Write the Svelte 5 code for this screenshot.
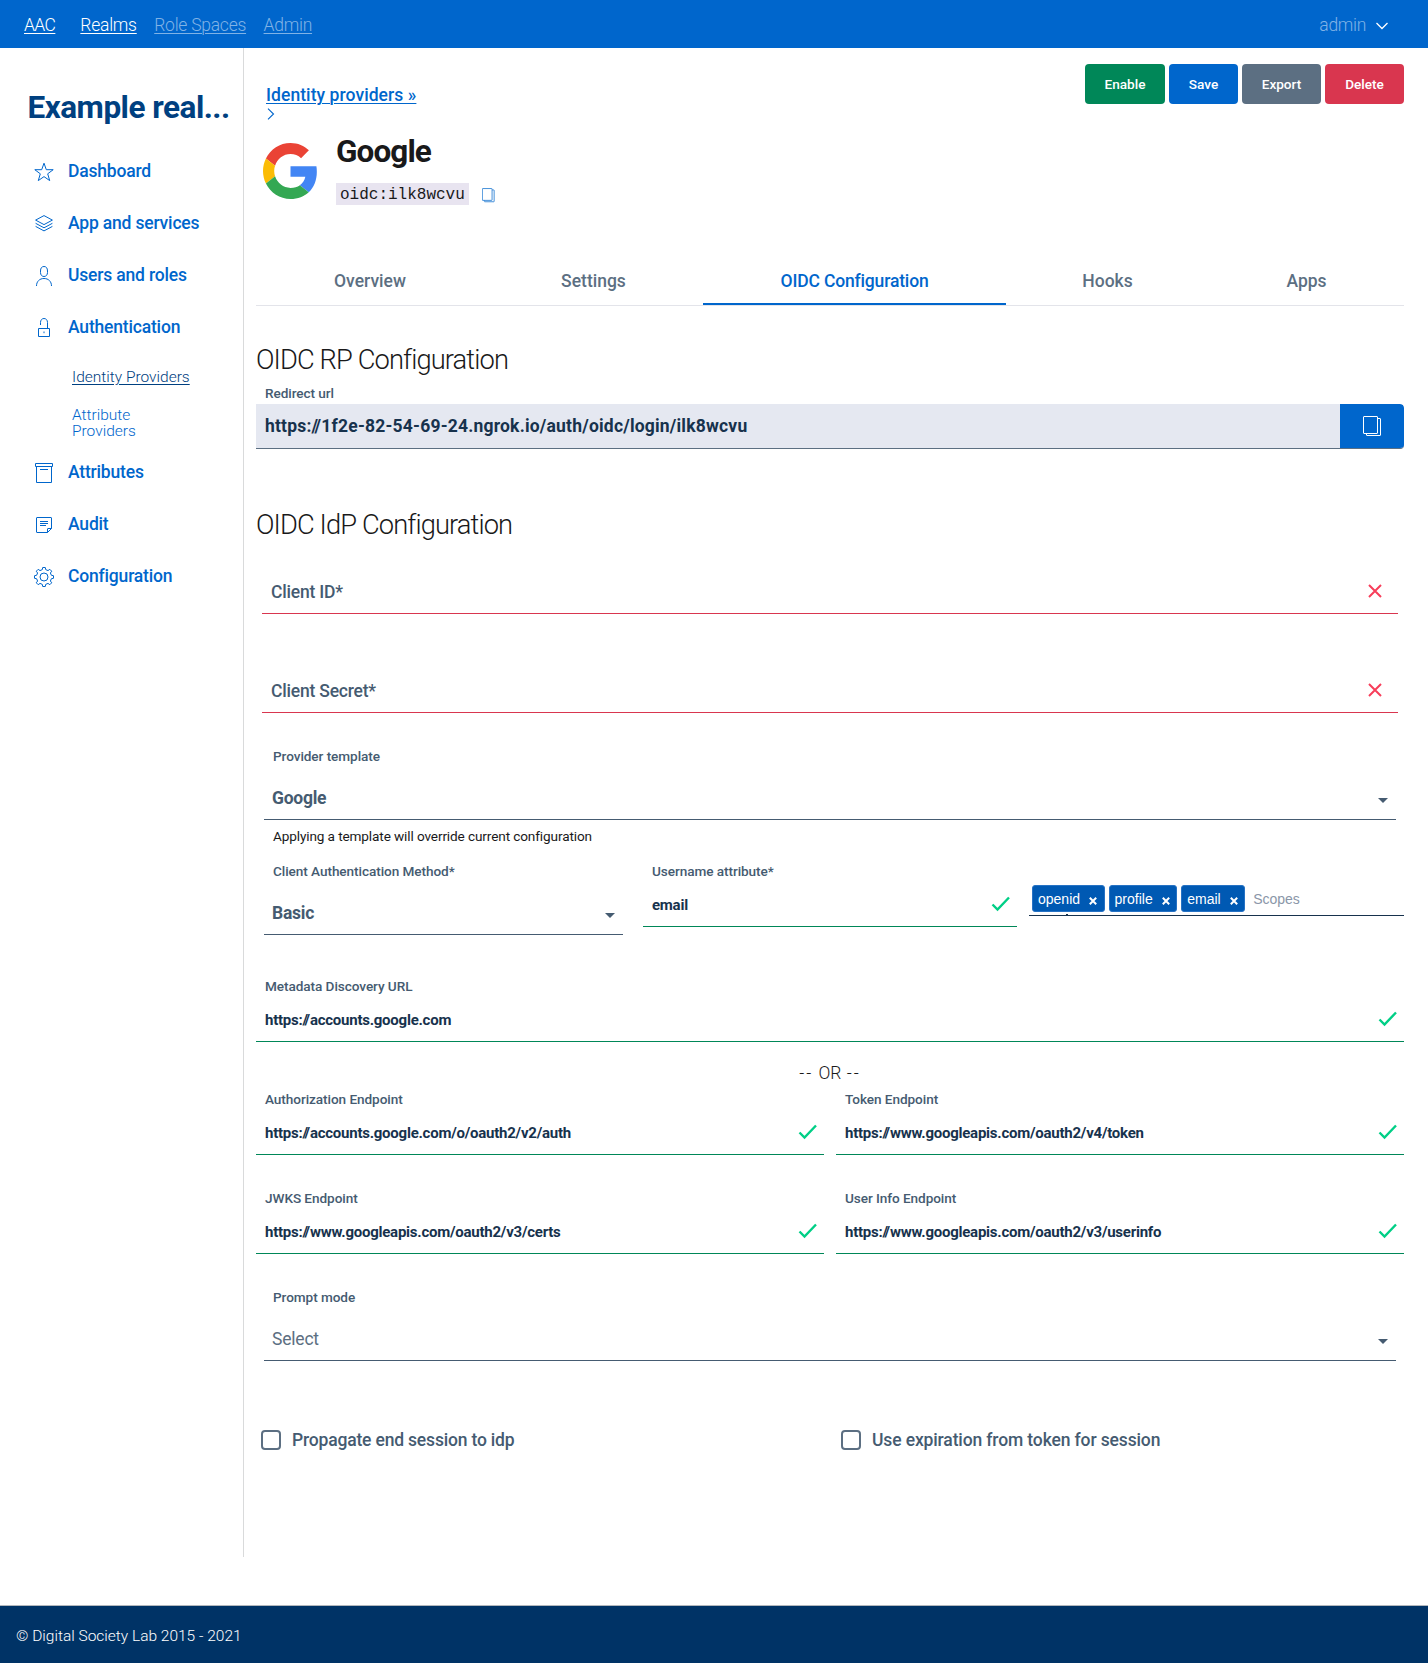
<script>
  const menu = [
    { label: 'Dashboard', icon: 'star' },
    { label: 'App and services', icon: 'layers' },
    { label: 'Users and roles', icon: 'user' },
    { label: 'Authentication', icon: 'lock', children: ['Identity Providers', 'Attribute Providers'] },
    { label: 'Attributes', icon: 'box' },
    { label: 'Audit', icon: 'note' },
    { label: 'Configuration', icon: 'gear' }
  ];
  const tabs = ['Overview', 'Settings', 'OIDC Configuration', 'Hooks', 'Apps'];
  const scopes = ['openid', 'profile', 'email'];
  const endpoints = [
    ['Authorization Endpoint', 'https://accounts.google.com/o/oauth2/v2/auth'],
    ['Token Endpoint', 'https://www.googleapis.com/oauth2/v4/token'],
    ['JWKS Endpoint', 'https://www.googleapis.com/oauth2/v3/certs'],
    ['User Info Endpoint', 'https://www.googleapis.com/oauth2/v3/userinfo']
  ];
</script>

{#snippet icon(name)}
  <svg class="icon" viewBox="0 0 24 24" width="24" height="24" aria-hidden="true">
    {#if name === 'star'}
      <path d="M12 3.2 14.3 9.7H21.2L15.7 13.8 17.7 20.6 12 16.6 6.3 20.6 8.3 13.8 2.8 9.7H9.7Z" />
    {:else if name === 'layers'}
      <path d="M12 3.6 20.4 8.1 12 12.6 3.6 8.1ZM3.6 11.3 12 15.8 20.4 11.3M3.6 14.4 12 18.9 20.4 14.4" />
    {:else if name === 'user'}
      <path d="M8.5 7C8.5 4 9.8 2.5 12 2.5S15.5 4 15.5 7V8.5C15.5 11 14 12.5 12 12.5S8.500 11 8.500 8.500ZM4.500 22C4.500 17.500 7.500 14.500 12 14.500S19.500 17.500 19.500 22" />
    {:else if name === 'lock'}
      <path d="M6.500 12.500H17.500V20.500H6.500ZM8.500 9V6.500C8.500 4 10 2.500 12 2.500S15.500 4 15.500 6.500V12.500M12 15.500V17.200" />
    {:else if name === 'box'}
      <path d="M3.500 2.500H20.500V5.500H3.500ZM4.500 5.500V21.500H19.500V5.500M8 8.500H16" />
    {:else if name === 'note'}
      <path d="M5 4.500H19Q19.500 4.500 19.500 5V15.500L15.500 19.500H5Q4.500 19.500 4.500 19V5Q4.500 4.500 5 4.500ZM19.500 15.500H16Q15.500 15.500 15.500 16V19.500M8 8.500H16M8 10.500H16M8 12.500H14" />
    {:else}
      <circle cx="12" cy="12" r="4" />
      <path d="M10.300 4.600 10.700 2.500H13.300L13.700 4.600 16 5.600 17.800 4.300 19.700 6.200 18.400 8 19.400 10.300 21.500 10.700V13.300L19.400 13.700 18.400 16 19.700 17.800 17.800 19.700 16 18.400 13.700 19.400 13.300 21.500H10.700L10.300 19.400 8 18.400 6.200 19.700 4.300 17.800 5.600 16 4.600 13.700 2.500 13.300V10.700L4.600 10.300 5.600 8 4.300 6.200 6.200 4.300 8 5.600Z" />
    {/if}
  </svg>
{/snippet}

{#snippet check()}
  <svg class="check" viewBox="0 0 20 16" width="20" height="16" aria-hidden="true"><path d="M1.500 8.500 6.500 13.500 18 1.500" /></svg>
{/snippet}

{#snippet copy()}
  <svg class="copy" viewBox="0 0 18 21" aria-hidden="true"><path d="M1 .5H14Q14.500 .5 14.500 1V17Q14.500 17.500 14 17.500H1Q.5 17.500 .5 17V1Q.5 .5 1 .5ZM14.500 2.500H17Q17.500 2.500 17.500 3V19Q17.500 19.500 17 19.500H4Q3.500 19.500 3.500 19V17.500" /></svg>
{/snippet}

{#snippet url(value)}
  {@const parts = value.split('//')}
  <span>{parts[0]}{#if parts.length > 1}<span class="slash">/</span>/{parts[1]}{/if}</span>
{/snippet}

{#snippet field(label, value)}
  <div class="field">
    <span class="label">{label}</span>
    <div class="value">{@render url(value)}{@render check()}</div>
  </div>
{/snippet}

{#snippet select(label, value, muted)}
  <div class="select">
    <span class="label">{label}</span>
    <div class="choice" class:muted>
      <span>{value}</span>
      <svg class="caret" viewBox="0 0 10 5" width="10" height="5" aria-hidden="true"><path d="M0 0H10L5 5Z" /></svg>
    </div>
  </div>
{/snippet}

<div class="page">
  <header>
    <nav>
      <a class="brand" href="#top">AAC</a>
      <a class="current" href="#top">Realms</a>
      <a href="#top">Role Spaces</a>
      <a href="#top">Admin</a>
    </nav>
    <div class="account">
      <span>admin</span>
      <svg viewBox="0 0 12 8" width="12" height="8" aria-hidden="true"><path d="M.5 1 6 6.500 11.500 1" /></svg>
    </div>
  </header>

  <div class="body">
    <aside>
      <h2>Example real...</h2>
      <ul class="menu">
        {#each menu as item}
          <li>
            <a class="entry" href="#top">{@render icon(item.icon)}<span>{item.label}</span></a>
            {#if item.children}
              <div class="sub">
                {#each item.children as child, i}
                  <a class:active={i === 0} href="#top">{child}</a>
                {/each}
              </div>
            {/if}
          </li>
        {/each}
      </ul>
    </aside>

    <main>
      <div class="top">
        <div class="crumbs">
          <a href="#top">Identity providers »</a>
          <svg viewBox="0 0 8 12" width="8" height="12" aria-hidden="true"><path d="M1 .7 6.500 6 1 11.300" /></svg>
        </div>
        <div class="actions">
          <button class="enable">Enable</button>
          <button class="save">Save</button>
          <button class="export">Export</button>
          <button class="delete">Delete</button>
        </div>
      </div>

      <div class="provider">
        <svg class="logo" viewBox="0 0 48 48" preserveAspectRatio="none" aria-hidden="true">
          <path fill="#ea4335" d="M24 9.500c3.540 0 6.710 1.220 9.210 3.600l6.850-6.850C35.900 2.380 30.470 0 24 0 14.620 0 6.510 5.380 2.560 13.220l7.980 6.190C12.430 13.720 17.740 9.500 24 9.500z" />
          <path fill="#4285f4" d="M46.980 24.550c0-1.570-.15-3.090-.38-4.550H24v9.020h12.940c-.58 2.960-2.260 5.480-4.780 7.180l7.730 6c4.510-4.180 7.090-10.360 7.090-17.650z" />
          <path fill="#fbbc05" d="M10.530 28.590c-.48-1.450-.76-2.990-.76-4.590s.27-3.140.76-4.590l-7.980-6.190C.92 16.460 0 20.120 0 24c0 3.880.92 7.540 2.560 10.780l7.970-6.190z" />
          <path fill="#34a853" d="M24 48c6.480 0 11.930-2.130 15.890-5.810l-7.730-6c-2.150 1.450-4.920 2.300-8.160 2.300-6.260 0-11.570-4.220-13.470-9.910l-7.980 6.190C6.510 42.620 14.620 48 24 48z" />
        </svg>
        <div class="identity">
          <h1>Google</h1>
          <div class="code-row"><code>oidc:ilk8wcvu</code>{@render copy()}</div>
        </div>
      </div>

      <div class="tabs">
        {#each tabs as tab, i}
          <a class:active={i === 2} href="#top">{tab}</a>
        {/each}
      </div>

      <h3>OIDC RP Configuration</h3>
      <span class="label redirect-label">Redirect url</span>
      <div class="redirect">
        {@render url('https://1f2e-82-54-69-24.ngrok.io/auth/oidc/login/ilk8wcvu')}
        <button>{@render copy()}</button>
      </div>

      <h3 class="idp">OIDC IdP Configuration</h3>
      {#each ['Client ID*', 'Client Secret*'] as name}
        <div class="required">
          <span>{name}</span>
          <svg viewBox="0 0 14 14" width="14" height="14" aria-hidden="true"><path d="M1 1 13 13M13 1 1 13" /></svg>
        </div>
      {/each}

      {@render select('Provider template', 'Google', false)}
      <p class="help">Applying a template will override current configuration</p>

      <div class="auth-row">
        {@render select('Client Authentication Method*', 'Basic', false)}
        {@render field('Username attribute*', 'email')}
        <div class="scopes">
          {#each scopes as scope}
            <span class="tag">{scope}<svg viewBox="0 0 8 8" width="8" height="8" aria-hidden="true"><path d="M.8 .8 7.200 7.200M7.200 .8 .8 7.200" /></svg></span>
          {/each}
          <span class="placeholder">Scopes</span>
          <i class="speck"></i>
        </div>
      </div>

      {@render field('Metadata Discovery URL', 'https://accounts.google.com')}
      <p class="or"><span class="dash">--</span> OR <span class="dash">--</span></p>

      <div class="endpoints">
        {#each endpoints as [label, value]}
          {@render field(label, value)}
        {/each}
      </div>

      {@render select('Prompt mode', 'Select', true)}

      <div class="checks">
        <label><input type="checkbox" /><span>Propagate end session to idp</span></label>
        <label><input type="checkbox" /><span>Use expiration from token for session</span></label>
      </div>
    </main>
  </div>

  <footer>© Digital Society Lab 2015 - 2021</footer>
</div>

<style>
  :global(body) { margin: 0; background: #fff; }
  .page {
    width: 1428px; height: 1663px; display: flex; flex-direction: column;
    font-family: Roboto, sans-serif; font-size: 17.5px; color: #19191a;
  }
  .page, .page * { box-sizing: border-box; }
  a { text-decoration: none; }
  h1, h2, h3, p, ul { margin: 0; padding: 0; }
  svg { flex: none; fill: none; }

  header {
    flex: none; height: 48px; padding: 0 40px 0 24px; background: #06c;
    display: flex; justify-content: space-between; font-weight: 300; line-height: 50px;
  }
  nav { display: flex; gap: 17.500px; letter-spacing: -.25px; }
  nav a { color: #80b3e6; text-decoration: underline; text-decoration-thickness: 1px; text-underline-offset: 2px; }
  nav .brand { margin-right: 7.500px; letter-spacing: -.6px; }
  nav .brand, nav .current { color: #fff; }
  .account { display: flex; align-items: center; gap: 10px; color: #80b3e6; letter-spacing: -.3px; }
  .account span { margin-top: 2px; }
  .account svg { stroke: #fff; stroke-width: 1.300; margin-top: 4px; }

  .body { display: flex; height: 1509px; flex: none; }
  aside { width: 244px; border-right: 1px solid #d9dadb; padding-top: 38px; }
  h2 { font-size: 31.500px; line-height: 44px; letter-spacing: -.5px; color: #004080; padding-left: 27.500px; white-space: nowrap; }
  .menu { list-style: none; padding-top: 15px; }
  .entry {
    height: 52px; padding-left: 32px; display: flex; align-items: center; gap: 12px;
    color: #06c; font-weight: 500; letter-spacing: -.18px;
  }
  .entry span { line-height: 20px; margin-top: -1px; }
  .icon { stroke: #06c; stroke-width: 1; margin-top: 2px; }
  .sub { display: flex; flex-direction: column; gap: 22px; width: 150px; margin: 16px 0 7px 72px; font-size: 15.500px; line-height: 16px; font-weight: 300; }
  .sub a { color: #06c; width: 118px; }
  .sub a:last-child { width: 80px; }
  .sub .active { color: #004080; text-decoration: underline; text-decoration-thickness: 1px; text-underline-offset: 2px; white-space: nowrap; }

  main { width: 1160px; padding-left: 12px; display: flex; flex-direction: column; }
  .top { height: 88px; display: flex; justify-content: space-between; padding-top: 16px; }
  .crumbs { padding: 21px 0 0 10px; display: flex; flex-direction: column; }
  .crumbs a { line-height: 20px; font-weight: 500; letter-spacing: .07px; color: #06c; text-decoration: underline; text-decoration-thickness: 1px; text-underline-offset: 2px; }
  .crumbs svg { stroke: #06c; stroke-width: 1.100; margin: 3px 0 0 1px; }
  .actions { display: flex; gap: 4px; height: 40px; }
  button { border: 0; padding: 0; color: #fff; font: 500 13.600px/20px Roboto, sans-serif; border-radius: 4px; }
  .enable { background: #008758; width: 80px; }
  .save { background: #06c; width: 69px; }
  .export { background: #5c6f82; width: 79px; }
  .delete { background: #d9364f; width: 79px; }

  .provider { height: 121px; padding-left: 7px; display: flex; gap: 18px; }
  .logo { width: 55px; height: 56px; margin-top: 7px; }
  .identity { display: flex; flex-direction: column; }
  h1 { font-size: 31.500px; line-height: 40px; margin-top: -4px; letter-spacing: -.9px; }
  .code-row { display: flex; align-items: center; gap: 13px; margin-top: 11px; }
  code { background: #e8e4f0; font: 16px/24px "Liberation Mono", monospace; padding: 0 4px; width: 133px; height: 22px; }
  .code-row .copy { width: 12.500px; height: 15px; stroke: #3385d6; stroke-width: 1.300; margin-top: 3px; }

  .tabs { height: 49px; display: grid; grid-template-columns: 228px 219px 303px 203px 195px; border-bottom: 1px solid #e3e4ea; }
  .tabs a { height: 48px; text-align: center; line-height: 48px; font-weight: 500; color: #5c6f82; }
  .tabs a.active { color: #06c; border-bottom: 2px solid #06c; letter-spacing: -.16px; }

  h3 { font-size: 27.300px; font-weight: 300; line-height: 34px; letter-spacing: -.89px; margin-top: 37px; }
  .label { font-size: 13.600px; font-weight: 500; line-height: 20px; color: #455b71; letter-spacing: -.07px; white-space: nowrap; }
  .redirect-label { padding-left: 9px; margin-top: 6px; line-height: 20px; }
  .redirect { height: 45px; margin-top: 1px; background: #e5e8f1; border-bottom: 1px solid #5c6f82; border-radius: 0 4px 4px 0; display: flex; justify-content: space-between; overflow: hidden; line-height: 45px; font-weight: 700; color: #17324d; letter-spacing: .2px; padding-left: 9px; }
  .slash { letter-spacing: -3.500px; }
  .redirect button { width: 64px; background: #06c; display: flex; align-items: center; justify-content: center; border-radius: 0 4px 0 0; }
  .redirect .copy { width: 18px; height: 21px; stroke: #fff; stroke-width: 1; }

  .idp { margin-top: 59px; }
  .required { height: 46px; margin: 26px 6px 0; border-bottom: 1px solid #d9364f; display: flex; align-items: center; justify-content: space-between; padding: 2px 16px 0 9px; font-weight: 500; color: #455b71; letter-spacing: -.2px; }
  .required + .required { margin-top: 53px; }
  .required svg { stroke: #f73e5a; stroke-width: 2; margin-top: -1px; }

  .select { margin: 33px 8px 0; height: 74px; display: flex; flex-direction: column; border-bottom: 1px solid #455b71; color: #455b71; }
  .select .label { padding-left: 9px; }
  .choice { display: flex; align-items: center; justify-content: space-between; height: 24px; margin-top: 20px; padding: 0 8px; font-weight: 700; letter-spacing: -.25px; }
  .choice.muted { font-weight: 400; color: #5c6f82; letter-spacing: -.2px; }
  .caret { fill: #455b71; margin-top: 5px; }
  .help { font-size: 13.600px; line-height: 20px; padding: 6px 0 0 17px; letter-spacing: -.12px; height: 41px; }

  .auth-row { display: flex; height: 115px; }
  .auth-row .select { width: 359px; margin: 0 0 0 8px; }
  .auth-row .field { width: 374px; margin: 0 0 0 20px; }
  .field { height: 66px; border-bottom: 1px solid #008758; display: flex; flex-direction: column; }
  .field .label { padding-left: 9px; }
  .value { display: flex; align-items: center; justify-content: space-between; height: 20px; margin-top: 14px; padding: 0 6px 0 9px; font-size: 15px; font-weight: 700; color: #17324d; letter-spacing: -.24px; }
  .check { stroke: #00cf86; stroke-width: 2.400; margin-top: -2px; }
  .scopes { position: relative; width: 375px; height: 32px; margin: 23px 0 0 12px; padding-left: 3px; border-bottom: 1px solid #17324d; display: flex; align-items: flex-start; gap: 4px; font: 14px/28px "Liberation Sans", Arial, sans-serif; }
  .tag { height: 27px; margin-top: 1px; background: #0059b3; border: 1px solid #2672c4; border-radius: 3px; color: #fff; padding: 0 6.500px 0 5px; display: flex; align-items: center; gap: 9px; }
  .tag svg { stroke: #fff; stroke-width: 2; margin-top: 4px; }
  .placeholder { color: #8a96a8; padding: 1px 0 0 4px; }
  .speck { position: absolute; left: 37px; bottom: 0; width: 2px; height: 1px; background: #17324d; }

  .or { text-align: center; font-weight: 300; line-height: 22px; height: 47px; padding-top: 20px; word-spacing: 1px; }
  .dash { letter-spacing: 2px; }
  .endpoints { display: grid; grid-template-columns: 568px 568px; column-gap: 12px; row-gap: 33px; }
  .checks { display: grid; grid-template-columns: 580px 568px; margin-top: 68px; padding-left: 5px; }
  .checks label { display: flex; align-items: center; gap: 11px; font-weight: 500; color: #455b71; letter-spacing: -.18px; line-height: 22px; }
  .checks label + label { letter-spacing: -.13px; }
  input { appearance: none; width: 20px; height: 20px; margin: 0; border: 2px solid #5c6f82; border-radius: 4px; }

  footer { flex: none; margin-top: 48px; height: 58px; border-top: 1px solid #b3b8bd; background: #036; color: #fff; font-size: 15.500px; font-weight: 300; line-height: 61px; padding-left: 16px; }
</style>
